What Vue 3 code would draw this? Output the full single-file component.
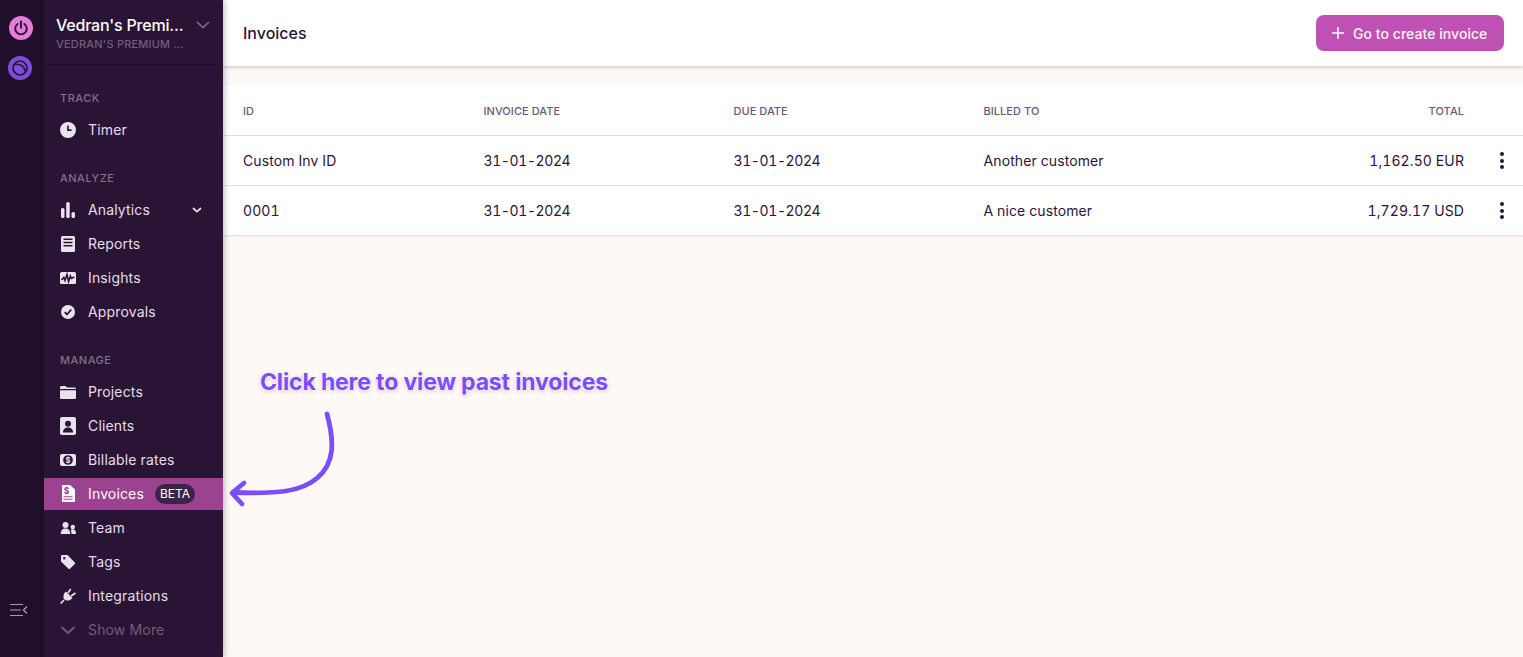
<template>
  <div class="app">
    <!-- rail -->
    <aside class="rail">
      <div class="rail-top">
        <span class="rail-btn pink">
          <svg width="16" height="16" viewBox="0 0 16 16" fill="none" stroke="#2c1338" stroke-width="1.900" stroke-linecap="round">
            <path d="M8 1.500v6.300" />
            <path d="M4.600 3.900a5.800 5.800 0 1 0 6.800 0" />
          </svg>
        </span>
        <span class="rail-btn violet">
          <svg width="16" height="16" viewBox="0 0 16 16" fill="none" stroke="#2c1338" stroke-width="1.700">
            <circle cx="8" cy="8" r="7" />
            <path d="M2.500 4.500C7 3.500 12.500 5.500 13.200 11.500" />
          </svg>
        </span>
      </div>
      <svg class="collapse" width="18" height="14" viewBox="0 0 18 14" fill="none" stroke="#a598ac" stroke-width="1.100">
        <path d="M0 1.500h13M0 7h11M0 12.500h13" />
        <path d="M17 3.500 13.500 7l3.500 3.500" stroke-width="1.400" />
      </svg>
    </aside>

    <!-- sidebar -->
    <nav class="sidebar">
      <div class="org">
        <div class="org-text">
          <div class="org-name">Vedran's Premi...</div>
          <div class="org-sub">VEDRAN'S PREMIUM ...</div>
        </div>
        <svg width="14" height="8" viewBox="0 0 14 8" fill="none" stroke="#7b6a85" stroke-width="1.700">
          <path d="M1 1l6 5.600L13 1" />
        </svg>
      </div>

      <section v-for="group in groups" :key="group.title" class="group">
        <div class="group-title">{{ group.title }}</div>
        <a
          v-for="item in group.items"
          :key="item.label"
          :class="['nav-item', { active: item.active, muted: item.muted }]"
        >
          <span class="nav-icon">
            <svg width="16" height="16" viewBox="0 0 16 16" v-html="icons[item.icon]"></svg>
          </span>
          <span class="nav-label">{{ item.label }}</span>
          <span v-if="item.active" class="beta">BETA</span>
          <svg v-if="item.caret" class="caret" width="10" height="6" viewBox="0 0 10 6" fill="none" stroke="#e6deea" stroke-width="1.700">
            <path d="M1 1l4 3.600L9 1" />
          </svg>
        </a>
      </section>
    </nav>

    <!-- main -->
    <main class="main">
      <header class="topbar">
        <h1>Invoices</h1>
        <button class="create">
          <svg width="12" height="12" viewBox="0 0 12 12" fill="none" stroke="#fff" stroke-width="1.500">
            <path d="M6 0v12M0 6h12" />
          </svg>
          Go to create invoice
        </button>
      </header>

      <div class="table">
        <div class="row head">
          <div>ID</div>
          <div>INVOICE DATE</div>
          <div>DUE DATE</div>
          <div>BILLED TO</div>
          <div class="right">TOTAL</div>
          <div></div>
        </div>
        <div v-for="inv in invoices" :key="inv.id" class="row">
          <div>{{ inv.id }}</div>
          <div class="date">{{ inv.date }}</div>
          <div class="date">{{ inv.due }}</div>
          <div>{{ inv.to }}</div>
          <div class="right">{{ inv.total }}</div>
          <div class="dots"><i></i><i></i><i></i></div>
        </div>
      </div>

      <!-- annotation over the page -->
      <div class="callout">Click here to view past invoices</div>
      <svg class="arrow" width="110" height="100" viewBox="0 0 110 100" fill="none" stroke="#7c4dff" stroke-width="4.800" stroke-linecap="round" stroke-linejoin="round">
        <path d="M99 3C102 14 105 26 103.500 40 101 62 84 76 58 80 42 82.500 22 82 5 81.500" />
        <path d="M16 72 4 82 14 93" />
      </svg>
    </main>
  </div>
</template>

<script setup>
const icons = {
  clock: '<path fill="#e9e3ec" fill-rule="evenodd" d="M8 0a8 8 0 1 1 0 16A8 8 0 0 1 8 0Zm-.9 3.500v5.400h4.400V7.300H8.700V3.500Z"/>',
  bars: '<g fill="#e9e3ec"><rect x="1" y="6" width="3.500" height="10" rx="1.500"/><rect x="6.200" y="0" width="3.500" height="16" rx="1.500"/><rect x="11.500" y="10" width="3.500" height="6" rx="1.500"/></g>',
  report: '<path fill="#e9e3ec" fill-rule="evenodd" d="M2.500 0h11A1.500 1.500 0 0 1 15 1.500v13a1.500 1.500 0 0 1-1.500 1.500h-11A1.500 1.500 0 0 1 1 14.500v-13A1.500 1.500 0 0 1 2.500 0ZM3.500 2.500v1.500h9V2.500Zm0 3.200v1.500h9V5.700Zm0 3.200v1.500h9V8.900Z"/>',
  insights: '<rect y="2" width="16" height="12" rx="1.600" fill="#e9e3ec"/><path d="M1.500 10 3.800 7.500 5 10.500l2-6 1.600 7 1.800-5.500 1 2.500 3-1.500" fill="none" stroke="#2c1338" stroke-width="1.600"/>',
  check: '<circle cx="8" cy="8" r="7" fill="#e9e3ec"/><path d="M4.700 8.200 7 10.500l4.300-5" fill="none" stroke="#2c1338" stroke-width="1.800"/>',
  folder: '<path fill="#e9e3ec" d="M0 3.500A1.500 1.500 0 0 1 1.500 2h4L7 3.600h7.500A1.500 1.500 0 0 1 16 5H0ZM0 6.300h16v7.200A1.500 1.500 0 0 1 14.500 15h-13A1.500 1.500 0 0 1 0 13.500Z"/>',
  client: '<rect width="16" height="18" y="-1" rx="2" fill="#e9e3ec"/><circle cx="8" cy="5.800" r="3" fill="#2c1338"/><path d="M3 14.500c0-3.500 2-5 5-5s5 1.500 5 5Z" fill="#2c1338"/>',
  rate: '<rect y="2" width="16" height="12" rx="2" fill="#e9e3ec"/><circle cx="8" cy="8" r="4.800" fill="#2c1338"/><text x="8" y="10.700" text-anchor="middle" font-size="7.500" font-weight="700" font-family="Inter" fill="#e9e3ec">$</text>',
  invoice: '<path fill="#fff" d="M2 -1h8l5 4.500V15.500a.5.5 0 0 1-.5.5h-12a.5.5 0 0 1-.5-.5Z"/><text x="6.500" y="8" text-anchor="middle" font-size="8.500" font-weight="700" font-family="Inter" fill="#9b4290">$</text><path d="M3.500 10.800h9M3.500 13.300h9" stroke="#9b4290" stroke-width="1.100"/>',
  team: '<g fill="#e9e3ec"><circle cx="5.500" cy="5" r="3"/><path d="M.7 14c0-3.500 1.800-5.500 4.800-5.500s4.800 2 4.800 5.500Z"/><circle cx="12.800" cy="7" r="2.200"/><path d="M11.500 14c0-1.800-.2-3.400-1-4.300 .6-.3 1.300-.5 2.100-.5 2.300 0 3.400 1.800 3.400 4.800Z"/></g>',
  tag: '<path fill="#e9e3ec" fill-rule="evenodd" d="M2 1h5.500l7.300 7.500a1 1 0 0 1 0 1.500l-4.800 4.800a1 1 0 0 1-1.500 0L1 7.500V2a1 1 0 0 1 1-1Zm2.300 2.100a1.200 1.200 0 1 0 0 2.400 1.200 1.200 0 0 0 0-2.400Z"/>',
  plug: '<path fill="#e9e3ec" d="M6 3.500 12.500 10C10.500 12.500 7 13.500 4.500 11.500 2.500 9.500 3.500 5.500 6 3.500Z"/><path d="M8 5l2.700-4M11 8l4.500-3M4 12 .6 15.500" fill="none" stroke="#e9e3ec" stroke-width="1.600"/>',
  more: '<path d="M1.500 5 8 11l6.500-6" fill="none" stroke="#6f5d7a" stroke-width="1.800"/>'
};

const groups = [
  { title: 'TRACK', items: [{ label: 'Timer', icon: 'clock' }] },
  {
    title: 'ANALYZE',
    items: [
      { label: 'Analytics', icon: 'bars', caret: true },
      { label: 'Reports', icon: 'report' },
      { label: 'Insights', icon: 'insights' },
      { label: 'Approvals', icon: 'check' }
    ]
  },
  {
    title: 'MANAGE',
    items: [
      { label: 'Projects', icon: 'folder' },
      { label: 'Clients', icon: 'client' },
      { label: 'Billable rates', icon: 'rate' },
      { label: 'Invoices', icon: 'invoice', active: true },
      { label: 'Team', icon: 'team' },
      { label: 'Tags', icon: 'tag' },
      { label: 'Integrations', icon: 'plug' },
      { label: 'Show More', icon: 'more', muted: true }
    ]
  }
];

const invoices = [
  { id: 'Custom Inv ID', date: '31-01-2024', due: '31-01-2024', to: 'Another customer', total: '1,162.50 EUR' },
  { id: '0001', date: '31-01-2024', due: '31-01-2024', to: 'A nice customer', total: '1,729.17 USD' }
];
</script>

<style>
html,
body {
  margin: 0;
  overflow: hidden;
}
</style>

<style scoped>
.app {
  display: flex;
  height: 657px;
  font-family: Inter, "Liberation Sans", sans-serif;
  background: #fef9f6;
  color: #2c1338;
  overflow: hidden;
}

.rail {
  width: 44px;
  flex: none;
  background: #1f0f2b;
  display: flex;
  flex-direction: column;
  justify-content: space-between;
  align-items: center;
  padding: 16px 0 40px;
  box-sizing: border-box;
}

.rail-top {
  display: flex;
  flex-direction: column;
  gap: 16px;
  margin-left: -4px;
}

.rail-btn {
  width: 24px;
  height: 24px;
  border-radius: 50%;
  display: flex;
  align-items: center;
  justify-content: center;
}

.rail-btn.pink {
  background: #e57cd8;
  margin-left: 1px;
}

.rail-btn.violet {
  background: #7f4ddb;
}

.collapse {
  margin-left: -7px;
}

.sidebar {
  width: 179px;
  flex: none;
  background: #2a1435;
  box-shadow: 2px 0 5px rgba(44, 19, 56, 0.25);
  z-index: 2;
}

.org {
  height: 65px;
  box-sizing: border-box;
  border-bottom: 1px solid #1f0f2b;
  padding: 15px 13px 0 12px;
  display: flex;
  justify-content: space-between;
  align-items: flex-start;
}

.org > svg {
  margin-top: 6px;
}

.org-name {
  font-size: 16px;
  line-height: 20px;
  font-weight: 500;
  letter-spacing: -0.2px;
  color: #fff;
  white-space: nowrap;
}

.org-sub {
  margin-top: 2px;
  font-size: 11px;
  line-height: 14px;
  font-weight: 500;
  letter-spacing: 0.2px;
  color: #6f5d7a;
  white-space: nowrap;
}

.group {
  padding-top: 20px;
}

.group:first-of-type {
  padding-top: 23px;
}

.group-title {
  height: 20px;
  line-height: 20px;
  margin-bottom: 6px;
  padding-left: 16px;
  font-size: 11px;
  font-weight: 500;
  letter-spacing: 0.5px;
  color: #80708a;
}

.nav-item {
  height: 32px;
  margin-bottom: 2px;
  display: flex;
  align-items: center;
  padding-left: 16px;
  font-size: 14px;
  letter-spacing: 0.15px;
  color: #e6deea;
  position: relative;
}

.nav-label {
  margin-bottom: 2px;
}

.nav-icon {
  width: 16px;
  height: 16px;
  margin-right: 12px;
  display: flex;
}

.nav-icon svg {
  overflow: visible;
}

.nav-item.active {
  background: #9b4290;
  color: #fff;
}

.nav-item.muted {
  color: #6f5d7a;
}

.beta {
  margin-left: 11px;
  height: 20px;
  line-height: 20px;
  padding: 0 5px;
  border-radius: 10px;
  background: #3b2347;
  color: #fff;
  font-size: 12px;
  letter-spacing: 0;
}

.caret {
  position: absolute;
  left: 148px;
  top: 13px;
}

.main {
  flex: 1;
  min-width: 0;
  position: relative;
}

.topbar {
  height: 66px;
  box-sizing: border-box;
  background: #fff;
  box-shadow: 0 1px 4px rgba(44, 19, 56, 0.25);
  padding: 15px 19px 0 20px;
  display: flex;
  justify-content: space-between;
  align-items: flex-start;
}

.topbar h1 {
  margin: 0;
  font-size: 16px;
  line-height: 36px;
  font-weight: 500;
}

.create {
  width: 188px;
  height: 36px;
  padding: 0 0 0 16px;
  border: none;
  border-radius: 8px;
  background: #c051b4;
  color: #fef4fc;
  font: 500 14px Inter, "Liberation Sans", sans-serif;
  letter-spacing: 0.05px;
  display: flex;
  align-items: center;
  gap: 9px;
}

.table {
  margin-top: 20px;
  background: #fff;
  box-shadow: 0 1px 2px rgba(44, 19, 56, 0.14);
  font-size: 14px;
  letter-spacing: 0.1px;
  font-variant-numeric: tabular-nums;
}

.row {
  height: 50px;
  box-sizing: border-box;
  display: grid;
  grid-template-columns: 240.5px 250px 250px 250px 230.5px 1fr;
  align-items: center;
  padding-left: 20px;
  border-top: 1px solid #e3e0e4;
}

.row.head {
  border-top: none;
  height: 49px;
  font-size: 11px;
  font-weight: 500;
  letter-spacing: 0.05px;
  color: #6f5677;
}

.date {
  letter-spacing: -0.4px;
}

.right {
  text-align: right;
}

.dots {
  display: flex;
  flex-direction: column;
  align-items: center;
  gap: 2.500px;
  width: 4px;
  margin-left: 36px;
}

.dots i {
  width: 4px;
  height: 4px;
  border-radius: 50%;
  background: #2c1338;
}

.callout {
  position: absolute;
  left: 37px;
  top: 367px;
  font-size: 23px;
  line-height: 30px;
  font-weight: 700;
  letter-spacing: -0.15px;
  color: #7c4dff;
  text-shadow: 0 0 2px #fff, 0 0 3px #fff, 0 1px 4px rgba(44, 19, 56, 0.3);
  white-space: nowrap;
}

.arrow {
  position: absolute;
  left: 5px;
  top: 411px;
}
</style>
